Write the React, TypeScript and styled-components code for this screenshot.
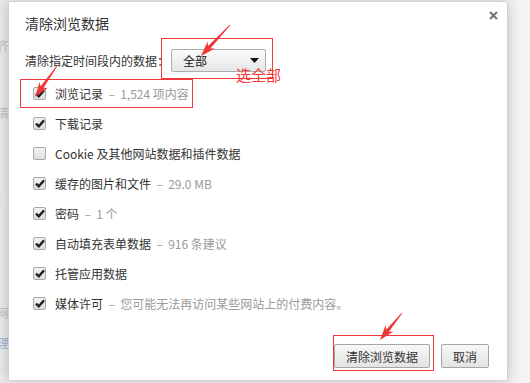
import styled, { createGlobalStyle } from "styled-components";

const GlobalStyle = createGlobalStyle`
  html, body {
    margin: 0;
    padding: 0;
    background: #f4f4f4;
  }
  body {
    font-family: "Noto Sans CJK SC", "Noto Sans", sans-serif;
  }
`;

const Screen = styled.div`
  position: relative;
  width: 530px;
  height: 383px;
  display: flex;
  align-items: flex-start;
  overflow: hidden;
  background: #f4f4f4;
`;

const LeftStrip = styled.div`
  width: 8px;
  height: 383px;
  flex: none;
  display: flex;
  flex-direction: column;
  overflow: hidden;
  background: #ebebeb;
`;

const Ghost = styled.span<{ $top: number; $blue?: boolean }>`
  display: block;
  margin-top: ${(p) => p.$top}px;
  margin-left: -3px;
  font-size: 12px;
  line-height: 14px;
  white-space: nowrap;
  color: ${(p) => (p.$blue ? "#9bb3d8" : "#c4c4c4")};
`;

const Dialog = styled.div`
  width: 500px;
  height: 380px;
  margin-top: 1px;
  box-sizing: border-box;
  flex: none;
  display: flex;
  flex-direction: column;
  background: #fff;
  border: 1px solid #d2d2d2;
  border-radius: 0 3px 0 0;
  box-shadow: 0 0 14px rgba(0, 0, 0, 0.22);
`;

const Header = styled.div`
  display: flex;
  justify-content: space-between;
  align-items: flex-start;
  padding: 11px 9px 0 16px;
`;

const Title = styled.h1`
  margin: 0;
  font-size: 14px;
  line-height: 20px;
  font-weight: normal;
  color: #333;
`;

const CloseButton = styled.button`
  border: 0;
  padding: 0;
  margin-top: -2px;
  width: 9px;
  height: 9px;
  background: transparent;
  display: flex;
  cursor: pointer;
`;

const Body = styled.div`
  flex: 1;
  display: flex;
  flex-direction: column;
  padding: 0 18px 12px 16px;
`;

const TimeRow = styled.div`
  display: flex;
  align-items: center;
  margin-top: 16px;
  height: 23px;
  font-size: 12px;
  color: #333;
`;

const Select = styled.div`
  margin-left: 2px;
  width: 95px;
  height: 23px;
  box-sizing: border-box;
  display: flex;
  align-items: center;
  justify-content: space-between;
  padding: 0 6px 0 11px;
  border: 1px solid #adadad;
  border-radius: 2px;
  background: linear-gradient(#fbfbfb, #e6e6e6);
  font-size: 12px;
  color: #111;
`;

const CheckList = styled.div`
  display: flex;
  flex-direction: column;
  margin-top: 6px;
`;

const CheckRow = styled.label`
  display: flex;
  align-items: center;
  height: 30px;
  padding-left: 8px;
  font-size: 12px;
  color: #333;
  white-space: nowrap;
`;

const Box = styled.span`
  width: 13px;
  height: 13px;
  box-sizing: border-box;
  flex: none;
  display: flex;
  align-items: center;
  justify-content: center;
  margin-right: 9px;
  border: 1px solid #a9a9a9;
  border-radius: 2px;
  background: linear-gradient(#f3f3f3, #dedede);
`;

const Detail = styled.span`
  color: #9a9a9a;
`;

const Footer = styled.div`
  margin-top: auto;
  display: flex;
  justify-content: flex-end;
  gap: 11px;
`;

const Button = styled.button`
  height: 24px;
  padding: 0 11px;
  border: 1px solid #a6a6a6;
  border-radius: 2px;
  background: linear-gradient(#f8f8f8, #e3e3e3);
  font-family: inherit;
  font-size: 12px;
  color: #333;
`;

const Mark = styled.div<{ $x: number; $y: number; $w: number; $h: number }>`
  position: absolute;
  left: ${(p) => p.$x}px;
  top: ${(p) => p.$y}px;
  width: ${(p) => p.$w}px;
  height: ${(p) => p.$h}px;
  box-sizing: border-box;
  border: 1px solid #f2373a;
  pointer-events: none;
`;

const Note = styled.span`
  position: absolute;
  left: 236px;
  top: 65px;
  font-size: 15px;
  line-height: 20px;
  color: #f2373a;
  pointer-events: none;
`;

const Overlay = styled.svg`
  position: absolute;
  left: 0;
  top: 0;
  pointer-events: none;
`;

const Check = () => (
  <svg width="10" height="9" viewBox="0 0 10 9">
    <path d="M1 4.6 L3.8 7.3 L9 1.4" fill="none" stroke="#222" strokeWidth="2.4" />
  </svg>
);

const arrowPoints = (x1: number, y1: number, x2: number, y2: number) => {
  const len = Math.hypot(x2 - x1, y2 - y1);
  const dx = (x2 - x1) / len;
  const dy = (y2 - y1) / len;
  const nx = -dy;
  const ny = dx;
  const bx = x2 - dx * 12;
  const by = y2 - dy * 12;
  const wx = x2 - dx * 15;
  const wy = y2 - dy * 15;
  const p = (x: number, y: number) => `${x.toFixed(1)},${y.toFixed(1)}`;
  return [
    p(x1 + nx * 0.4, y1 + ny * 0.4),
    p(bx + nx * 1.7, by + ny * 1.7),
    p(wx + nx * 5, wy + ny * 5),
    p(x2, y2),
    p(wx - nx * 5, wy - ny * 5),
    p(bx - nx * 1.7, by - ny * 1.7),
    p(x1 - nx * 0.4, y1 - ny * 0.4),
  ].join(" ");
};

const arrows = [
  [230, 25, 201, 56],
  [57, 66, 35, 97],
  [402, 313, 380, 340],
];

const items = [
  { label: "浏览记录", detail: "1,524 项内容", checked: true },
  { label: "下载记录", checked: true },
  { label: "Cookie 及其他网站数据和插件数据", checked: false },
  { label: "缓存的图片和文件", detail: "29.0 MB", checked: true },
  { label: "密码", detail: "1 个", checked: true },
  { label: "自动填充表单数据", detail: "916 条建议", checked: true },
  { label: "托管应用数据", checked: true },
  { label: "媒体许可", detail: "您可能无法再访问某些网站上的付费内容。", checked: true },
];

export default function App() {
  return (
    <Screen>
      <GlobalStyle />
      <LeftStrip>
        <Ghost $top={39}>齐</Ghost>
        <Ghost $top={53}>清</Ghost>
        <Ghost $top={74}>(</Ghost>
        <Ghost $top={98}>网</Ghost>
        <Ghost $top={16} $blue>理</Ghost>
      </LeftStrip>
      <Dialog>
        <Header>
          <Title>清除浏览数据</Title>
          <CloseButton aria-label="关闭">
            <svg width="9" height="9" viewBox="0 0 9 9">
              <path d="M1 1 L8 8 M8 1 L1 8" stroke="#777" strokeWidth="2.2" />
            </svg>
          </CloseButton>
        </Header>
        <Body>
          <TimeRow>
            清除指定时间段内的数据：
            <Select>
              全部
              <svg width="9" height="5" viewBox="0 0 9 5">
                <path d="M0 0 H9 L4.5 5 Z" fill="#111" />
              </svg>
            </Select>
          </TimeRow>
          <CheckList>
            {items.map((it) => (
              <CheckRow key={it.label}>
                <Box>{it.checked && <Check />}</Box>
                {it.label}
                {it.detail && <Detail>&nbsp;&nbsp;–&nbsp; {it.detail}</Detail>}
              </CheckRow>
            ))}
          </CheckList>
          <Footer>
            <Button>清除浏览数据</Button>
            <Button>取消</Button>
          </Footer>
        </Body>
      </Dialog>
      <Mark $x={161} $y={38} $w={112} $h={41} />
      <Mark $x={20} $y={79} $w={173} $h={29} />
      <Mark $x={333} $y={335} $w={101} $h={36} />
      <Note>选全部</Note>
      <Overlay width="530" height="383">
        {arrows.map(([a, b, c, d], i) => (
          <polygon key={i} points={arrowPoints(a, b, c, d)} fill="#f2373a" />
        ))}
      </Overlay>
    </Screen>
  );
}
